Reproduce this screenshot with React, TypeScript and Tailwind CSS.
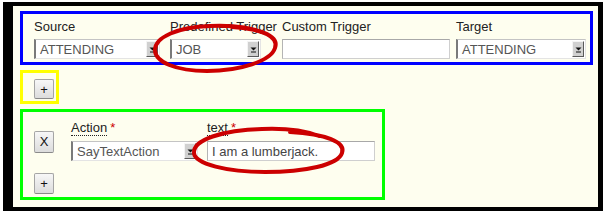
import React from "react";

const font = { fontFamily: '"Liberation Sans", Arial, sans-serif' };

function Arrow() {
  return (
    <div className="flex h-[16px] w-[12px] items-center justify-center border border-t-[#f4f4f4] border-l-[#f4f4f4] border-r-[#5a5a5a] border-b-[#5a5a5a] bg-[#d0d0d0]">
      <svg width="7" height="7" viewBox="0 0 7 7">
        <path d="M0.5 1.5 L6.5 1.5 L3.5 4.5 Z" fill="#111" />
        <rect x="1" y="5.5" width="5" height="1" fill="#111" />
      </svg>
    </div>
  );
}

function Select({ value, w }: { value: string; w: string }) {
  return (
    <div
      className={`flex h-[20px] items-center justify-between border-t border-r border-b border-l-2 border-t-[#c4c4c4] border-r-[#e4e4e4] border-b-[#e4e4e4] border-l-[#7a7a7a] bg-white pl-[4px] pr-[1px] text-[13px] leading-none text-[#555] ${w}`}
    >
      <span>{value}</span>
      <Arrow />
    </div>
  );
}

function Input({ value, w }: { value: string; w: string }) {
  return (
    <div
      className={`flex h-[20px] items-center border border-t-[#a8a8a8] border-l-[#b4b4b4] border-r-[#cfcfcf] border-b-[#cfcfcf] bg-white pl-[4px] text-[13px] leading-none text-[#444] ${w}`}
    >
      {value}
    </div>
  );
}

function Btn({ label, h }: { label: string; h: string }) {
  return (
    <div
      className={`flex w-[20px] items-center justify-center rounded-[2px] border border-[#a5a5a5] border-b-[#8a8a8a] bg-gradient-to-b from-[#f7f7f7] to-[#dcdcdc] text-[13px] leading-none text-[#111] ${h}`}
    >
      {label}
    </div>
  );
}

function Label({ text, req }: { text: string; req?: boolean }) {
  return (
    <div className="h-[15px] text-[13px] leading-[15px] text-[#222]">
      {req ? (
        <>
          <span className="border-b border-dotted border-[#222]">{text}</span>
          <span className="ml-[3px] text-[#c00]">*</span>
        </>
      ) : (
        text
      )}
    </div>
  );
}

export default function App() {
  return (
    <div className="relative h-[212px] w-[604px] overflow-hidden bg-white" style={font}>
      <div className="ml-[3px] mt-[2px] flex h-[209px] w-[600px] flex-col items-start border-t-4 border-r-[5px] border-b-4 border-l-[10px] border-black bg-[#fefeef]">
        {/* Blue box */}
        <div className="ml-[7px] mt-[5px] flex h-[54px] w-[573px] border-[3px] border-[#0000ff] pl-[11px] pt-[5px]">
          <div className="flex w-[136px] flex-col">
            <Label text="Source" />
            <div className="mt-[5px]">
              <Select value="ATTENDING" w="w-[126px]" />
            </div>
          </div>
          <div className="flex w-[112px] flex-col">
            <Label text="Predefined Trigger" />
            <div className="mt-[5px]">
              <Select value="JOB" w="w-[91px]" />
            </div>
          </div>
          <div className="flex w-[174px] flex-col">
            <Label text="Custom Trigger" />
            <div className="mt-[5px]">
              <Input value="" w="w-[168px]" />
            </div>
          </div>
          <div className="flex w-[130px] flex-col">
            <Label text="Target" />
            <div className="mt-[5px]">
              <Select value="ATTENDING" w="w-[130px]" />
            </div>
          </div>
        </div>

        {/* Yellow box */}
        <div className="ml-[7px] mt-[5px] h-[34px] w-[39px] border-[3px] border-[#ffff00] pl-[11px] pt-[6px]">
          <Btn label="+" h="h-[20px]" />
        </div>

        {/* Green box */}
        <div className="ml-[7px] mt-[5px] flex h-[91px] w-[365px] flex-col border-[3px] border-[#00ff00] pl-[11px] pt-[8px]">
          <div className="flex items-center">
            <div className="mt-[2px]">
              <Btn label="X" h="h-[22px]" />
            </div>
            <div className="ml-[17px] flex w-[136px] flex-col">
              <Label text="Action" req />
              <div className="mt-[6px]">
                <Select value="SayTextAction" w="w-[127px]" />
              </div>
            </div>
            <div className="flex flex-col">
              <Label text="text" req />
              <div className="mt-[6px]">
                <Input value="I am a lumberjack." w="w-[168px]" />
              </div>
            </div>
          </div>
          <div className="mt-[12px]">
            <Btn label="+" h="h-[21px]" />
          </div>
        </div>
      </div>

      {/* Red annotation loops */}
      <svg className="pointer-events-none absolute left-0 top-0" width="604" height="212" viewBox="0 0 604 212">
        <g fill="none" stroke="#cc0000" strokeWidth="4" strokeLinecap="round">
          <path d="M232 27 C264 29 279 37 275 48 C271 61 240 71 207 71 C176 71 155 62 155 50 C155 37 178 27 210 26 C232 25 252 28 264 33" />
          <path d="M290 132 C326 134 346 142 342 153 C338 165 305 172 265 172 C227 172 195 164 194 153 C193 140 222 130 262 129 C286 128 306 131 319 136" />
        </g>
      </svg>
    </div>
  );
}
